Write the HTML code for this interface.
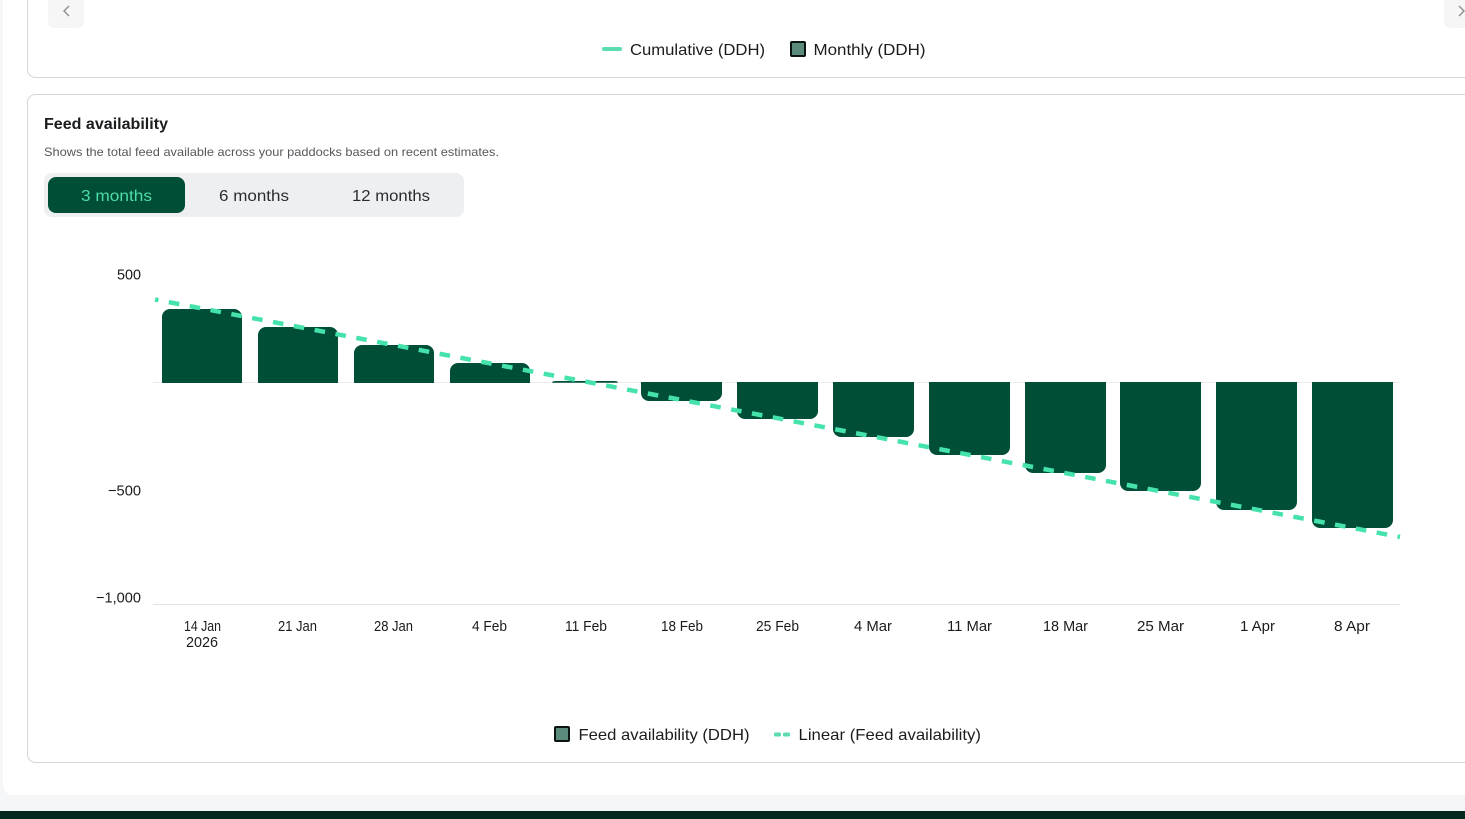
<!DOCTYPE html>
<html><head><meta charset="utf-8"><style>
html,body{margin:0;padding:0;width:1465px;height:819px;overflow:hidden;background:#f5f6f7}
svg{display:block;position:absolute;left:0;top:0}
text{font-family:"Liberation Sans",sans-serif;fill:#1a1c1e}
.l{font-size:16px}
.a{font-size:15px;fill:#1c1c1c}
</style></head><body>
<svg width="1465" height="819" viewBox="0 0 1465 819" xmlns="http://www.w3.org/2000/svg">
<rect x="3" y="-20" width="1500" height="815" rx="10" fill="#fff"/>
<rect x="0" y="811" width="1465" height="8" fill="#03291f"/>
<rect x="27.5" y="-40" width="1500" height="117.5" rx="8" fill="#fff" stroke="#d6d6d6"/>
<rect x="27.5" y="94.5" width="1500" height="668" rx="8" fill="#fff" stroke="#d6d6d6"/>

<rect x="48" y="-12" width="36" height="40" rx="6" fill="#f6f6f7"/>
<path d="M69 6L64 11L69 16" fill="none" stroke="#8b8d90" stroke-width="1.4"/>
<rect x="1444" y="-12" width="36" height="40" rx="6" fill="#f6f6f7"/>
<path d="M1459 6L1464 11L1459 16" fill="none" stroke="#8b8d90" stroke-width="1.4"/>

<rect x="602" y="47" width="20" height="4" rx="2" fill="#5adcb0"/>
<text class="l" x="630" y="55" textLength="135" lengthAdjust="spacingAndGlyphs">Cumulative (DDH)</text>
<rect x="791" y="42" width="14" height="14" rx="1" fill="#5a8b7c" stroke="#0c1512" stroke-width="2"/>
<text class="l" x="813.500" y="55" textLength="112" lengthAdjust="spacingAndGlyphs">Monthly (DDH)</text>

<text x="44" y="129" font-size="16" font-weight="700" textLength="124" lengthAdjust="spacingAndGlyphs">Feed availability</text>
<text x="44" y="156" font-size="12" style="fill:#55585c" textLength="455" lengthAdjust="spacingAndGlyphs">Shows the total feed available across your paddocks based on recent estimates.</text>

<rect x="44" y="173" width="420" height="44" rx="8" fill="#eeeff1"/>
<rect x="48" y="177" width="137" height="36" rx="8" fill="#004d38"/>
<text class="l" x="81" y="201" style="fill:#4fdca6" textLength="71" lengthAdjust="spacingAndGlyphs">3 months</text>
<text class="l" x="219" y="201" style="fill:#2a2c2f" textLength="70" lengthAdjust="spacingAndGlyphs">6 months</text>
<text class="l" x="352" y="201" style="fill:#2a2c2f" textLength="78" lengthAdjust="spacingAndGlyphs">12 months</text>

<line x1="153" y1="382.500" x2="1400" y2="382.500" stroke="#ececec"/>
<line x1="153" y1="604.500" x2="1400" y2="604.500" stroke="#e2e2e2"/>

<g fill="#004d38">
<path d="M162 383V317a8 8 0 0 1 8-8h64a8 8 0 0 1 8 8V383Z"/>
<path d="M258 383V335a8 8 0 0 1 8-8h64a8 8 0 0 1 8 8V383Z"/>
<path d="M354 383V353a8 8 0 0 1 8-8h64a8 8 0 0 1 8 8V383Z"/>
<path d="M450 383V371a8 8 0 0 1 8-8h64a8 8 0 0 1 8 8V383Z"/>
<path d="M552 382.800Q552 381 556 381H614Q618 381 618 382.800Z"/>
<path d="M641 382V393a8 8 0 0 0 8 8h65a8 8 0 0 0 8-8V382Z"/>
<path d="M737 382V411a8 8 0 0 0 8 8h65a8 8 0 0 0 8-8V382Z"/>
<path d="M833 382V429a8 8 0 0 0 8 8h65a8 8 0 0 0 8-8V382Z"/>
<path d="M929 382V447a8 8 0 0 0 8 8h65a8 8 0 0 0 8-8V382Z"/>
<path d="M1025 382V465a8 8 0 0 0 8 8h65a8 8 0 0 0 8-8V382Z"/>
<path d="M1120 382V483a8 8 0 0 0 8 8h65a8 8 0 0 0 8-8V382Z"/>
<path d="M1216 382V502a8 8 0 0 0 8 8h65a8 8 0 0 0 8-8V382Z"/>
<path d="M1312 382V520a8 8 0 0 0 8 8h65a8 8 0 0 0 8-8V382Z"/>
</g>
<line x1="155" y1="299.500" x2="1400" y2="537" stroke="#45e3ab" stroke-width="4.500" stroke-dasharray="10.600 10.600" stroke-dashoffset="7.100"/>

<text class="a" x="117" y="279.500" textLength="24" lengthAdjust="spacingAndGlyphs">500</text>
<text class="a" x="108" y="495.500" textLength="33" lengthAdjust="spacingAndGlyphs">−500</text>
<text class="a" x="96" y="602.500" textLength="45" lengthAdjust="spacingAndGlyphs">−1,000</text>

<text class="a" x="184" y="631" textLength="37" lengthAdjust="spacingAndGlyphs">14 Jan</text>
<text class="a" x="186" y="647" textLength="32" lengthAdjust="spacingAndGlyphs">2026</text>
<text class="a" x="278" y="631" textLength="39" lengthAdjust="spacingAndGlyphs">21 Jan</text>
<text class="a" x="374" y="631" textLength="39" lengthAdjust="spacingAndGlyphs">28 Jan</text>
<text class="a" x="472" y="631" textLength="35" lengthAdjust="spacingAndGlyphs">4 Feb</text>
<text class="a" x="565" y="631" textLength="42" lengthAdjust="spacingAndGlyphs">11 Feb</text>
<text class="a" x="661" y="631" textLength="42" lengthAdjust="spacingAndGlyphs">18 Feb</text>
<text class="a" x="756" y="631" textLength="43" lengthAdjust="spacingAndGlyphs">25 Feb</text>
<text class="a" x="854" y="631" textLength="38" lengthAdjust="spacingAndGlyphs">4 Mar</text>
<text class="a" x="947" y="631" textLength="45" lengthAdjust="spacingAndGlyphs">11 Mar</text>
<text class="a" x="1043" y="631" textLength="45" lengthAdjust="spacingAndGlyphs">18 Mar</text>
<text class="a" x="1137" y="631" textLength="47" lengthAdjust="spacingAndGlyphs">25 Mar</text>
<text class="a" x="1240" y="631" textLength="35" lengthAdjust="spacingAndGlyphs">1 Apr</text>
<text class="a" x="1334" y="631" textLength="36" lengthAdjust="spacingAndGlyphs">8 Apr</text>

<rect x="555" y="727" width="14" height="14" rx="1" fill="#5a8b7c" stroke="#0c1512" stroke-width="2"/>
<text class="l" x="578.500" y="740" textLength="171" lengthAdjust="spacingAndGlyphs">Feed availability (DDH)</text>
<rect x="774" y="732.500" width="7" height="4" rx="1.500" fill="#5adcb0"/>
<rect x="783" y="732.500" width="7" height="4" rx="1.500" fill="#5adcb0"/>
<text class="l" x="798.500" y="740" textLength="182.500" lengthAdjust="spacingAndGlyphs">Linear (Feed availability)</text>
</svg>
</body></html>
